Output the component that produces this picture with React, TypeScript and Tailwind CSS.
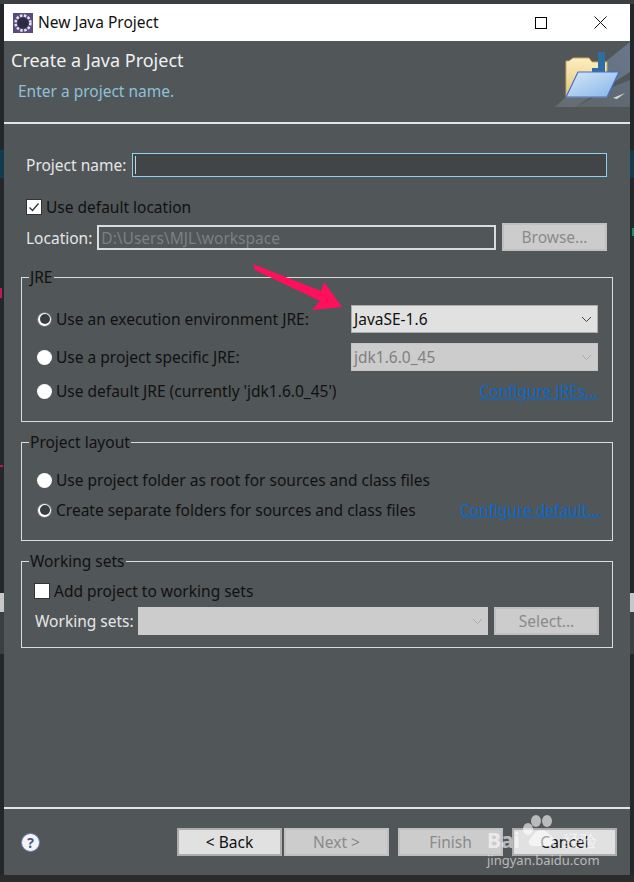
import type { ReactNode } from "react";

const Radio = ({ checked = false }: { checked?: boolean }) => (
  <span className={`flex h-[15px] w-[15px] shrink-0 items-center justify-center rounded-full bg-white ${checked ? "border border-[#666]" : ""}`}>
    {checked && <span className="h-[10px] w-[10px] rounded-full bg-[#3a3d40]" />}
  </span>
);

const Checkbox = ({ checked = false }: { checked?: boolean }) => (
  <span className="flex h-[16px] w-[16px] shrink-0 items-center justify-center border border-[#333] bg-white">
    {checked && (
      <svg width="12" height="12" viewBox="0 0 12 12" fill="none" stroke="#333" strokeWidth="1.3">
        <path d="M1.5 6.5 4.5 9.5 10.5 2.5" />
      </svg>
    )}
  </span>
);

const Chevron = ({ color }: { color: string }) => (
  <svg width="11" height="7" viewBox="0 0 11 7" fill="none" stroke={color} strokeWidth="1">
    <path d="M1 1l4.5 4.5L10 1" />
  </svg>
);

const Button = ({ label, disabled = false, className = "" }: { label: string; disabled?: boolean; className?: string }) => (
  <div
    className={`flex h-[28px] items-center justify-center border-2 pt-[2px] text-[15.5px] ${
      disabled ? "border-[#c0c0c0] bg-[#cccccc] text-[#8a8a8a]" : "border-[#adadad] bg-[#e1e1e1] text-[#111]"
    } ${className}`}
  >
    {label}
  </div>
);

const Group = ({ title, className, children }: { title: string; className: string; children: ReactNode }) => (
  <div className={`relative mx-[17px] border border-[#dcdcdc] ${className}`}>
    <span className="absolute top-[-11px] left-[7px] bg-[#515658] px-[1px] text-[15.5px] leading-[20px] text-[#111]">{title}</span>
    {children}
  </div>
);

const RadioRow = ({ label, checked, children, className = "" }: { label: string; checked?: boolean; children?: ReactNode; className?: string }) => (
  <div className={`flex items-center ${className}`}>
    <Radio checked={checked} />
    <span className="ml-[4px] pt-[2px] text-[15.5px] whitespace-nowrap text-[#111]">{label}</span>
    {children}
  </div>
);

const FolderIcon = () => (
  <svg width="75" height="66" viewBox="0 0 75 66" className="absolute top-[1px] right-0">
    <defs>
      <linearGradient id="beam" x1="0" y1="1" x2="1" y2="0">
        <stop offset="0" stopColor="#666c70" />
        <stop offset="1" stopColor="#67778c" />
      </linearGradient>
      <linearGradient id="folderBack" x1="0" y1="0" x2="0" y2="1">
        <stop offset="0" stopColor="#fdeec0" />
        <stop offset="1" stopColor="#e2c47c" />
      </linearGradient>
      <linearGradient id="folderFront" x1="0" y1="0" x2="1" y2="1">
        <stop offset="0" stopColor="#d6e9fb" />
        <stop offset="1" stopColor="#84b3e8" />
      </linearGradient>
    </defs>
    <path d="M0 65 40 28 75 0V30L20 65Z" fill="url(#beam)" />
    <path d="M20 65 60 44 75 38V65Z" fill="url(#beam)" opacity="0.7" />
    <path d="M11 55V19h3l4-3h16l3 4h15v35Z" fill="url(#folderBack)" stroke="#c9a95f" />
    <path d="M43 10h7v20H37v-4h6Z" fill="#2f6ea3" />
    <path d="M11 55 23 30h41L52 55Z" fill="url(#folderFront)" stroke="#4a6cc2" strokeWidth="1.2" />
    <path d="M58 56 70 51 62 57Z" fill="#d8d8d8" />
  </svg>
);

export default function App() {
  return (
    <div className="relative flex h-[882px] w-[634px] flex-col overflow-hidden bg-[#24272a] px-[4px] pt-[4px] pb-[7px] font-['Noto_Sans',sans-serif]">
      {/* bits of the editor showing behind the dialog */}
      <div className="absolute inset-x-0 top-0 h-[4px] bg-[#3c3f41]" />
      <div className="absolute inset-x-0 bottom-0 h-[7px] bg-[#2b2b2b]" />
      <div className="absolute top-[150px] left-0 h-[28px] w-[4px] bg-[#123c4e]" />
      <div className="absolute top-[150px] right-0 h-[28px] w-[4px] bg-[#123c4e]" />
      <div className="absolute top-[593px] left-0 h-[19px] w-[4px] bg-[#c8c8c8]" />
      <div className="absolute top-[593px] right-0 h-[19px] w-[4px] bg-[#c8c8c8]" />
      <div className="absolute top-[612px] left-0 h-[42px] w-[4px] bg-[#3c3f41]" />
      <div className="absolute top-[612px] right-0 h-[42px] w-[4px] bg-[#3c3f41]" />
      <div className="absolute top-[288px] left-0 h-[10px] w-[2px] bg-[#c2185b]" />
      <div className="absolute top-[465px] left-0 h-[2px] w-[3px] bg-[#c2185b]" />
      <div className="absolute top-[228px] right-0 h-[8px] w-[2px] bg-[#1f8a6a]" />

      <div className="relative flex h-[37px] shrink-0 items-center bg-white pl-[9px]">
        <svg width="20" height="20" viewBox="0 0 20 20">
          <rect width="20" height="20" fill="#5b4a7e" />
          <circle cx="10" cy="10" r="7.5" fill="none" stroke="#e4e4e4" strokeWidth="2.5" strokeDasharray="2.5 1.5" />
          <circle cx="10" cy="10" r="5.5" fill="#2c2a44" />
        </svg>
        <span className="ml-[5px] text-[15.5px] text-[#111]">New Java Project</span>
        <div className="ml-auto flex items-center">
          <span className="h-[12px] w-[12px] border border-black" />
          <svg width="13" height="13" viewBox="0 0 13 13" stroke="#111" className="mr-[23px] ml-[47px]">
            <path d="M.5.5l12 12M12.5.5l-12 12" />
          </svg>
        </div>
      </div>

      <div className="relative flex flex-1 flex-col bg-[#515658]">
        <div className="relative h-[83px] shrink-0 overflow-hidden border-b-2 border-[#e4e4e4] pl-[7px]">
          <div className="pt-[7px] text-[18px] leading-[24px] text-[#f0f0f0]">Create a Java Project</div>
          <div className="pt-[9px] pl-[7px] text-[15.5px] leading-[20px] text-[#8fc0d8]">Enter a project name.</div>
          <FolderIcon />
        </div>

        <div className="flex flex-1 flex-col pt-[29px]">
          <div className="flex h-[24px] items-center pr-[23px] pl-[22px]">
            <span className="pt-[2px] text-[15.5px] text-[#e6e6e6]">Project name:</span>
            <div className="ml-[6px] flex h-[24px] flex-1 items-center border border-[#8fd0f5] bg-[#414548] pl-[2px]">
              <span className="h-[18px] w-px bg-[#cfcfcf]" />
            </div>
          </div>

          <div className="mt-[20px] flex h-[20px] items-center pl-[22px]">
            <Checkbox checked />
            <span className="ml-[4px] pt-[2px] text-[15.5px] text-[#111]">Use default location</span>
          </div>

          <div className="mt-[6px] flex h-[28px] items-center pr-[23px] pl-[22px]">
            <span className="pt-[3px] text-[15.5px] text-[#e6e6e6]">Location:</span>
            <div className="ml-[5px] flex h-[25px] flex-1 items-center border-2 border-[#dcdcdc] bg-[#515658] pt-[3px] pl-[2px] text-[15.5px] text-[#7c8083]">
              D:\Users\MJL\workspace
            </div>
            <Button label="Browse..." disabled className="ml-[6px] w-[105px]" />
          </div>

          <Group title="JRE" className="mt-[26px] h-[145px] shrink-0 px-[15px] pt-[27px]">
            <RadioRow label="Use an execution environment JRE:" checked className="h-[28px]">
              <div className="absolute left-[329px] flex h-[28px] w-[247px] items-center justify-between border border-[#adadad] bg-[#e1e1e1] pr-[5px] pl-[2px] text-[15.5px] text-[#111]">
                <span className="pt-[2px]">JavaSE-1.6</span>
                <Chevron color="#444" />
              </div>
            </RadioRow>
            <RadioRow label="Use a project specific JRE:" className="mt-[10px] h-[28px]">
              <div className="absolute left-[329px] flex h-[28px] w-[247px] items-center justify-between border border-[#c4c4c4] bg-[#cccccc] pr-[5px] pl-[2px] text-[15.5px] text-[#808080]">
                <span className="pt-[2px]">jdk1.6.0_45</span>
                <Chevron color="#a8a8a8" />
              </div>
            </RadioRow>
            <RadioRow label="Use default JRE (currently 'jdk1.6.0_45')" className="mt-[6px] h-[28px]">
              <span className="absolute right-[14px] pt-[2px] text-[15.5px] text-[#0a68c8] underline">Configure JREs...</span>
            </RadioRow>
          </Group>

          <Group title="Project layout" className="mt-[20px] h-[99px] shrink-0 px-[15px] pt-[23px]">
            <RadioRow label="Use project folder as root for sources and class files" className="h-[28px]" />
            <RadioRow label="Create separate folders for sources and class files" checked className="mt-[2px] h-[28px]">
              <span className="absolute right-[12px] pt-[2px] text-[15.5px] text-[#0a68c8] underline">Configure default...</span>
            </RadioRow>
          </Group>

          <Group title="Working sets" className="mt-[20px] h-[87px] shrink-0 pt-[19px] pr-[13px] pl-[12px]">
            <div className="flex h-[20px] items-center">
              <Checkbox />
              <span className="ml-[4px] pt-[2px] text-[15.5px] text-[#111]">Add project to working sets</span>
            </div>
            <div className="mt-[6px] flex h-[28px] items-center">
              <span className="pt-[2px] pl-[1px] text-[15.5px] text-[#e6e6e6]">Working sets:</span>
              <div className="ml-[4px] flex h-[28px] flex-1 items-center justify-end bg-[#cccccc] pr-[5px]">
                <Chevron color="#a8a8a8" />
              </div>
              <Button label="Select..." disabled className="ml-[6px] w-[105px]" />
            </div>
          </Group>

          <div className="relative mt-auto flex h-[68px] shrink-0 items-center border-t-2 border-[#e4e4e4] pr-[13px] pl-[17px]">
            <svg width="19" height="19" viewBox="0 0 19 19">
              <circle cx="9.5" cy="9.5" r="9" fill="#f2f4f8" stroke="#6f7fa8" />
              <text x="9.5" y="14.5" textAnchor="middle" fontSize="14" fontWeight="700" fill="#4a5a80">?</text>
            </svg>
            <div className="ml-auto flex">
              <Button label="< Back" className="w-[105px]" />
              <Button label="Next >" disabled className="ml-[2px] w-[105px]" />
              <Button label="Finish" disabled className="ml-[9px] w-[105px]" />
              <Button label="Cancel" className="ml-[9px] w-[105px]" />
            </div>
          </div>
        </div>
      </div>

      {/* annotation arrow */}
      <svg width="92" height="48" viewBox="0 0 92 48" className="absolute top-[264px] left-[252px]">
        <path d="M1 0 69 27 72 18 90 43 60 46 68 37 3 6Z" fill="#ff0f5c" />
      </svg>

      {/* watermark */}
      <div className="absolute top-[814px] left-[487px] w-[112px] text-white/60">
        <svg width="36" height="32" viewBox="0 0 36 32" fill="currentColor" className="absolute top-[1px] left-[35px]">
          <ellipse cx="6" cy="14" rx="5" ry="6" />
          <ellipse cx="14" cy="6" rx="5" ry="6" />
          <ellipse cx="25" cy="6" rx="5" ry="6" />
          <path d="M19 15c5 0 10 5 13 9 2 4 0 7-5 7H11c-5 0-5-4-3-7 3-4 6-9 11-9Z" />
        </svg>
        <div className="flex h-[38px] items-end justify-between pr-[2px] text-[21px] leading-[24px] font-bold">
          <span>Bai</span>
          <span className="text-[17px] leading-[22px] font-normal">经验</span>
        </div>
        <div className="text-[13px] leading-[16px] whitespace-nowrap">jingyan.baidu.com</div>
      </div>
    </div>
  );
}
